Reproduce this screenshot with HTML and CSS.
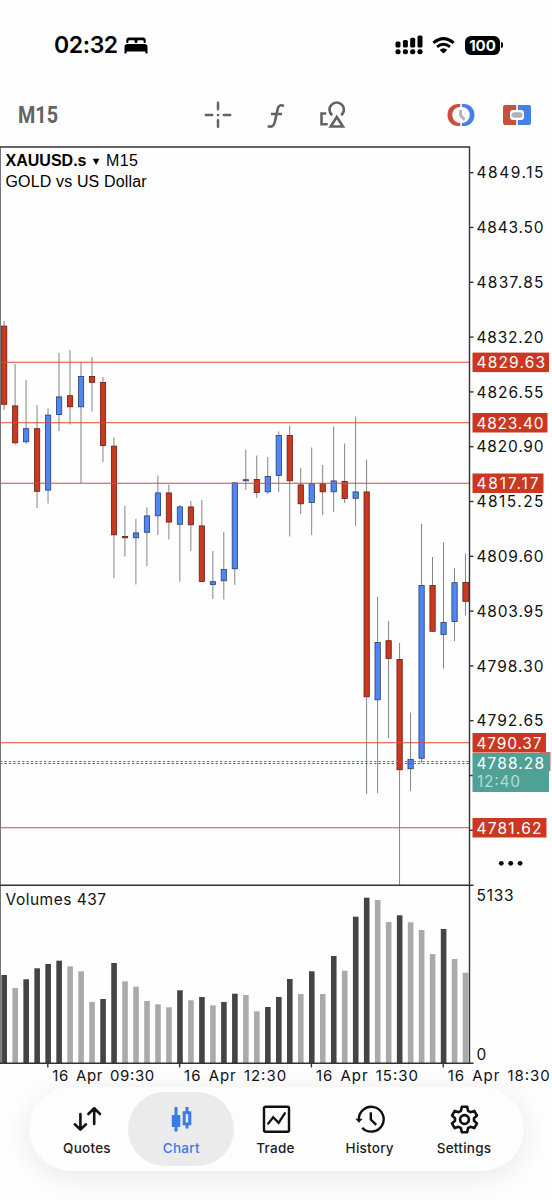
FILE: index.html
```
<!DOCTYPE html>
<html lang="en">
<head>
    <meta charset="UTF-8">
    <meta name="viewport" content="width=device-width, initial-scale=1.0">
    <title>XAUUSD.s M15</title>
    <link rel="stylesheet" href="styles.css">
</head>
<body>
    <header class="status-bar">
        <div class="status-left">
            <span class="clock">02:32</span>
            <svg class="bed" width="24" height="17" viewBox="0 0 24 17">
                <path d="M2.3 6V3Q2.3.5 5 .5h14q2.700 0 2.700 2.500v3h-2V4.300q0-1.100-1.100-1.100h-4.200q-1.100 0-1.100 1.100V6h-2.600V4.300q0-1.100-1.100-1.100H5.400q-1.100 0-1.100 1.100V6z"/>
                <path d="M3.500 7h17Q23.500 7 23.500 10v6.500h-2v-2h-19v2h-2V10Q.5 7 3.500 7z"/>
            </svg>
        </div>
        <div class="status-right">
            <svg width="28" height="20" viewBox="0 0 28 20">
                <rect x="0.500" y="6.500" width="5" height="6" rx="1.500"/>
                <rect x="7.900" y="5" width="5" height="7.500" rx="1.500"/>
                <rect x="15.200" y="2.800" width="5" height="9.700" rx="1.500"/>
                <rect x="22.500" y="0.500" width="5" height="12" rx="1.500"/>
                <rect x="0.500" y="14.200" width="5" height="5" rx="2"/>
                <rect x="7.900" y="14.200" width="5" height="5" rx="2"/>
                <rect x="15.200" y="14.200" width="5" height="5" rx="2"/>
                <rect x="22.500" y="14.200" width="5" height="5" rx="2"/>
            </svg>
            <svg class="wifi" width="23" height="17" viewBox="0 0 23 17">
                <path d="M1.400 5.800Q11.500-2.600 21.600 5.800" fill="none" stroke="#000" stroke-width="3"/>
                <path d="M5 9.900q6.500-5.300 13 0" fill="none" stroke="#000" stroke-width="2.900"/>
                <path d="M11.500 16.600 7.700 12.900q3.800-3.200 7.600 0z"/>
            </svg>
            <div class="battery">100</div>
            <div class="battery-tip"></div>
        </div>
    </header>

    <div class="toolbar">
        <span class="timeframe"><span>M15</span></span>
        <div class="tools">
            <svg width="28" height="28" viewBox="0 0 28 28" fill="none" stroke="#636363" stroke-width="2.500" stroke-linecap="round">
                <path d="M14 1.800v6.400M14 19.300v6.400M1.800 14h6.400M19.800 14h6.400"/>
                <circle cx="14" cy="14" r="1.300" fill="#636363" stroke="none"/>
            </svg>
            <svg width="21" height="28" viewBox="0 0 21 28" fill="none" stroke="#636363" stroke-width="2.600">
                <path d="M20 5C16.500 3.400 14.400 4.600 13.700 8l-2.900 13C10 24.900 7.600 26.600 3.700 25.100M7 13h11"/>
            </svg>
            <svg width="28" height="28" viewBox="0 0 28 28" fill="none" stroke="#636363" stroke-width="2.600">
                <path d="M9.300 12.500H4.500v10.800h6.200"/>
                <path d="M15.200 14.300A7.200 7.200 0 1 1 24.200 14.300"/>
                <path d="M19.800 16 25.900 25.500H13.700z"/>
            </svg>
        </div>
        <div class="actions">
            <svg width="28" height="24" viewBox="0 0 28 24">
                <path d="M13.200 1H11C4.500 1 .5 6 .5 12S4.500 23 11 23h2.200v-3a8 8 0 0 1 0-16z" fill="#c9503f"/>
                <path d="M14.800 1H17c6.500 0 10.500 5 10.500 11S23.500 23 17 23h-2.200v-3a8 8 0 0 0 0-16z" fill="#477fe8"/>
                <path d="M13.600 7v5.500l4 4.300" fill="none" stroke="#adb3b7" stroke-width="2.800"/>
            </svg>
            <svg width="28" height="20" viewBox="0 0 28 20">
                <path d="M2 0h11.200v5H10q-3 0-3 3v4q0 3 3 3h3.200v5H2q-2 0-2-2V2q0-2 2-2z" fill="#c9503f"/>
                <path d="M14.800 0H26q2 0 2 2v16q0 2-2 2H14.800v-5H18q3 0 3-3V8q0-3-3-3h-3.200z" fill="#477fe8"/>
                <rect x="8.500" y="7.200" width="11" height="5.600" rx="2.800" fill="#adb3b7"/>
            </svg>
        </div>
    </div>

    <svg class="chart" id="chart" width="552" height="941" viewBox="0 146 552 941">
        <g id="volumes"></g>
        <g id="candles"></g>
        <g id="levels"></g>
        <line class="bid" x1="0" y1="763.500" x2="469" y2="763.500"/>
        <line class="ask" x1="0" y1="761.500" x2="469" y2="761.500"/>

        <path class="frame-left" d="M.5 147V1063"/>
        <path class="frame" d="M0 147H469.500V1063.500M0 885.300H473.500M0 1063.300H473.500"/>
        <g id="axis"></g>

        <text class="symbol" x="5.500" y="166" textLength="81">XAUUSD.s</text>
        <path d="M92.800 158.800h6.600l-3.300 6.200z"/>
        <text class="title" x="106" y="166" textLength="32">M15</text>
        <text class="title" x="5.500" y="186.500" textLength="141">GOLD vs US Dollar</text>
        <text class="label" x="5.500" y="904.500" textLength="100.500">Volumes 437</text>
        <text class="label" x="476.500" y="901" textLength="37">5133</text>
        <text class="label" x="476.500" y="1060">0</text>

        <g id="tags"></g>
        <rect x="540" y="752" width="10.500" height="19" fill="#dd6864"/>
        <rect x="472.500" y="753" width="76.500" height="39" fill="#4fa095"/>
        <text class="label light" x="476.500" y="769" textLength="67.500">4788.28</text>
        <text class="label pale" x="477" y="787" textLength="43">12:40</text>

        <g>
            <circle cx="501.300" cy="863.300" r="2.400"/>
            <circle cx="510.700" cy="863.300" r="2.400"/>
            <circle cx="520.100" cy="863.300" r="2.400"/>
        </g>
    </svg>

    <nav class="tab-bar">
        <a class="tab">
            <svg width="30" height="30" viewBox="0 0 30 30" fill="none" stroke="#111" stroke-width="2.600" stroke-linecap="round" stroke-linejoin="round">
                <path d="M8.400 10v15M2.800 20.300l5.600 5.300 5.600-5.300M22.200 20V4.500M16.400 10l5.800-5.700L28 10"/>
            </svg>
            <span>Quotes</span>
        </a>
        <a class="tab active">
            <svg width="30" height="30" viewBox="0 0 30 30" fill="#397be6">
                <path d="M8.500 3h3v8h2.800v12h-2.800v4.500h-3V23H5.800V11h2.700z"/>
                <path fill-rule="evenodd" d="M19.500 3h3v4.300h2.800v13.900h-2.800v3.300h-3v-3.300h-2.800V7.300h2.800zM19.700 10v8.500h2.500V10z"/>
            </svg>
            <span>Chart</span>
        </a>
        <a class="tab">
            <svg width="30" height="30" viewBox="0 0 30 30" fill="none" stroke="#111" stroke-width="2.400">
                <rect x="3" y="2.700" width="25" height="25" rx="1.500"/>
                <path d="M7.200 19.600l5-6.300 5.400 5.500 6.200-9.500" stroke-width="2.300" stroke-linecap="round"/>
            </svg>
            <span>Trade</span>
        </a>
        <a class="tab">
            <svg width="30" height="30" viewBox="0 0 30 30" fill="none" stroke="#111" stroke-width="2.400">
                <path d="M3.900 16.300A12.400 12.400 0 1 1 7.200 23.700"/>
                <path d="M.4 14.800h7.200l-3.600 3.900z" fill="#111" stroke="none"/>
                <path d="M15.800 8.200v7.300l5.400 5.400"/>
            </svg>
            <span>History</span>
        </a>
        <a class="tab">
            <svg width="30" height="30" viewBox="0 0 30 30" fill="none" stroke="#111" stroke-width="2.600" stroke-linejoin="round">
                <path d="M12.800 2.800h5.400l.8 4 2.500 1.400 3.800-1.300 2.700 4.700-3 2.600v2.600l3 2.600-2.700 4.700-3.800-1.300-2.500 1.400-.8 4h-5.400l-.8-4-2.500-1.400-3.800 1.300L3 19.400l3-2.600v-2.600l-3-2.600 2.700-4.700 3.800 1.300L12 6.800z"/>
                <circle cx="15.500" cy="15.500" r="4.400"/>
            </svg>
            <span>Settings</span>
        </a>
    </nav>

    <script>
        // high, body top, body bottom, low, colour, volume top, volume shade
        const bars = [
            [320.7, 325.7, 404.5, 410, 'r', 975, 'd'],
            [364, 405.5, 443, 444.5, 'r', 988, 'l'],
            [380, 428.3, 442, 444, 'b', 979.3, 'd'],
            [405, 428.3, 491.5, 508, 'r', 968.3, 'd'],
            [408.5, 414.7, 490.3, 503.5, 'b', 964, 'd'],
            [353, 396.5, 414.7, 431, 'b', 960.7, 'd'],
            [350, 395.3, 407, 424.5, 'r', 966.3, 'l'],
            [362, 376, 407, 483, 'b', 971.3, 'l'],
            [357, 376, 382.5, 411.7, 'r', 1002, 'l'],
            [377, 382, 445.7, 462, 'r', 999, 'd'],
            [437.5, 445.7, 535, 578, 'r', 963, 'd'],
            [506, 536, 538, 556.5, 'r', 981.3, 'l'],
            [519, 532.5, 538, 584.5, 'b', 986.7, 'l'],
            [507.5, 515.5, 532.5, 566, 'b', 1001, 'l'],
            [475.5, 492.5, 516, 535, 'b', 1004.3, 'l'],
            [484.7, 492.5, 522.3, 539.5, 'r', 1007.3, 'l'],
            [505, 506.5, 524.5, 581.7, 'b', 990.3, 'd'],
            [501, 506.5, 525, 551, 'r', 1000.3, 'l'],
            [500, 525.5, 581.7, 582, 'r', 997, 'd'],
            [551, 581.3, 584.7, 599, 'b', 1005.3, 'l'],
            [532, 569, 581, 599.5, 'b', 1002, 'd'],
            [482.5, 482.5, 569, 585, 'b', 993.7, 'd'],
            [449.5, 479.3, 481, 490, 'b', 995, 'l'],
            [455.5, 479, 492.7, 498, 'r', 1011.3, 'l'],
            [457, 476, 492, 494, 'b', 1007, 'd'],
            [431.5, 435, 475.7, 492, 'b', 997, 'd'],
            [425.5, 435, 481, 536.5, 'r', 979, 'd'],
            [468, 484.5, 504, 514, 'r', 994, 'l'],
            [447.5, 483.5, 502.7, 535, 'b', 971.3, 'd'],
            [465, 483.3, 492, 515, 'r', 994, 'l'],
            [426.5, 480.5, 492, 512, 'b', 956, 'd'],
            [443.5, 481, 498.7, 503, 'r', 970.7, 'l'],
            [416.5, 491.5, 498.5, 526, 'b', 916.7, 'd'],
            [459.5, 491.5, 697, 794, 'r', 897.7, 'd'],
            [597, 642, 700, 793, 'b', 900, 'l'],
            [621, 640.3, 658.7, 738, 'r', 922, 'l'],
            [643, 659, 770, 885, 'r', 915.3, 'd'],
            [712.5, 759, 769, 791, 'b', 922.3, 'l'],
            [524, 585, 758.5, 763, 'b', 930, 'l'],
            [557, 585, 631.5, 631.5, 'r', 954, 'l'],
            [542.5, 622, 634.7, 668.5, 'b', 929, 'd'],
            [568, 582.3, 621.7, 641, 'b', 959, 'l'],
            [553.5, 582, 601.5, 615.5, 'r', 972.7, 'l']
        ];

        const levels = [
            { price: '4829.63', y: 362.3, width: 76.5, text: 68.5 },
            { price: '4823.40', y: 422.7, width: 75, text: 67 },
            { price: '4817.17', y: 483.2, width: 71, text: 62 },
            { price: '4790.37', y: 742.7, width: 73.5, text: 65 },
            { price: '4781.62', y: 827.7, width: 74, text: 65 }
        ];

        const times = ['09:30', '12:30', '15:30', '18:30'];

        let candles = '';
        let volumes = '';
        bars.forEach((bar, i) => {
            const [high, top, bottom, low, color, volTop, shade] = bar;
            const x = 4.1 + i * 10.985;
            const w = i === 42 ? 5.9 : 5.3;
            candles += `<line class="wick" x1="${x}" y1="${high}" x2="${x}" y2="${low}"/>`;
            candles += `<rect class="body-${color}" x="${x - 2.6}" y="${top + 0.4}" width="${w}" height="${Math.max(bottom - top - 0.6, 0.8)}"/>`;
            volumes += `<rect class="vol-${shade}" x="${x - 2.7}" y="${volTop}" width="5.6" height="${1063 - volTop}"/>`;
        });
        document.getElementById('candles').innerHTML = candles;
        document.getElementById('volumes').innerHTML = volumes;

        let lines = '';
        let tags = '';
        levels.forEach(level => {
            lines += `<line class="level" x1="0" y1="${level.y}" x2="469" y2="${level.y}"/>`;
            tags += `<rect class="tag" x="472.5" y="${level.y - 9.7}" width="${level.width}" height="19.5"/>`;
            tags += `<text class="label light" x="476.5" y="${level.y + 6}" textLength="${level.text}">${level.price}</text>`;
        });
        document.getElementById('levels').innerHTML = lines;
        document.getElementById('tags').innerHTML = tags;

        let axis = '';
        for (let i = 0; i < 13; i++) {
            const y = 172.7 + i * 54.8;
            axis += `<line class="tick" x1="469" y1="${y}" x2="473.5" y2="${y}"/>`;
            if (i < 11) {
                axis += `<text class="label" x="476.5" y="${y + 5.7}" textLength="67">${(4849.15 - i * 5.65).toFixed(2)}</text>`;
            }
        }
        times.forEach((time, i) => {
            const x = 47.8 + i * 131.8;
            axis += `<line class="tick" x1="${x}" y1="1063" x2="${x}" y2="1067.5"/>`;
            axis += `<text class="label date" x="${x + 4.5}" y="1081" textLength="102">16 Apr ${time}</text>`;
        });
        document.getElementById('axis').innerHTML = axis;
    </script>
</body>
</html>
```
FILE: styles.css
```
* {
    box-sizing: border-box;
}

body {
    margin: 0;
    width: 552px;
    height: 1200px;
    overflow: hidden;
    background: #fefefe;
    font-family: Inter, 'Liberation Sans', sans-serif;
    color: #000;
}

svg {
    display: block;
}

.status-bar {
    display: flex;
    justify-content: space-between;
    align-items: center;
    height: 90px;
    padding: 0 49px 0 54px;
}

.status-left,
.status-right {
    display: flex;
    align-items: center;
}

.clock {
    font-size: 23px;
    font-weight: 600;
    letter-spacing: -0.4px;
}

.bed {
    margin-left: 6px;
}

.wifi {
    margin-left: 9px;
}

.battery {
    width: 35px;
    height: 19px;
    margin-left: 10px;
    border-radius: 6px;
    background: #000;
    color: #fff;
    font-size: 15px;
    font-weight: 700;
    line-height: 19px;
    text-align: center;
}

.battery-tip {
    width: 2px;
    height: 6px;
    margin-left: 1px;
    border-radius: 0 2px 2px 0;
    background: #000;
}

.toolbar {
    display: flex;
    align-items: center;
    height: 56px;
    padding: 0 21px 6px 18px;
}

.timeframe {
    width: 186px;
    font-family: Roboto, sans-serif;
    font-size: 23px;
    font-weight: 700;
    color: #636363;
}

.timeframe span {
    display: inline-block;
    transform: scaleX(0.86);
    transform-origin: left;
}

.tools {
    display: flex;
    gap: 32px;
}

.actions {
    display: flex;
    align-items: center;
    gap: 28px;
    margin-left: auto;
}

.frame,
.tick {
    fill: none;
    stroke: #333;
    stroke-width: 1.4;
}

.frame-left {
    stroke: #777;
    stroke-width: 1;
}

.wick {
    stroke: #666;
    stroke-width: 0.8;
}

.body-r {
    fill: #cb3821;
    stroke: #642014;
    stroke-width: 0.8;
}

.body-b {
    fill: #5086f2;
    stroke: #263f73;
    stroke-width: 0.8;
}

.vol-d {
    fill: #444;
}

.vol-l {
    fill: #aaa;
}

.level {
    stroke: #d64b3b;
    stroke-width: 1.1;
}

.tag {
    fill: #cb3821;
}

.bid,
.ask {
    stroke: #397a68;
    stroke-width: 1;
    stroke-dasharray: 2.4 2;
}

.ask {
    stroke: #a5645d;
}

.symbol,
.title {
    font-family: 'Liberation Sans', sans-serif;
    font-size: 16px;
}

.symbol {
    font-weight: 700;
}

.label {
    font-size: 15.5px;
    fill: #111;
}

.label.date {
    font-size: 15px;
    word-spacing: 2px;
}

.label.light {
    fill: #fff;
}

.label.pale {
    fill: #b5dcd4;
}

.tab-bar {
    display: flex;
    justify-content: space-between;
    width: 495px;
    height: 84px;
    margin-left: 29px;
    padding: 5px 7px 5px 5px;
    border-radius: 42px;
    background: #fdfdfd;
    box-shadow: 0 6px 32px rgba(0, 0, 0, 0.09);
}

.tab {
    display: flex;
    flex-direction: column;
    align-items: center;
    width: 106px;
    height: 74px;
    margin: 0 -6px;
    padding-top: 12px;
    border-radius: 37px;
    font-size: 13.5px;
    font-weight: 500;
    letter-spacing: 0.25px;
    color: #1c1c1c;
}

.tab:first-child {
    margin-left: 0;
}

.tab:last-child {
    margin-right: 0;
}

.tab span {
    margin-top: 6px;
    line-height: 17px;
}

.tab.active {
    background: #ebebeb;
    color: #397be6;
}
```
